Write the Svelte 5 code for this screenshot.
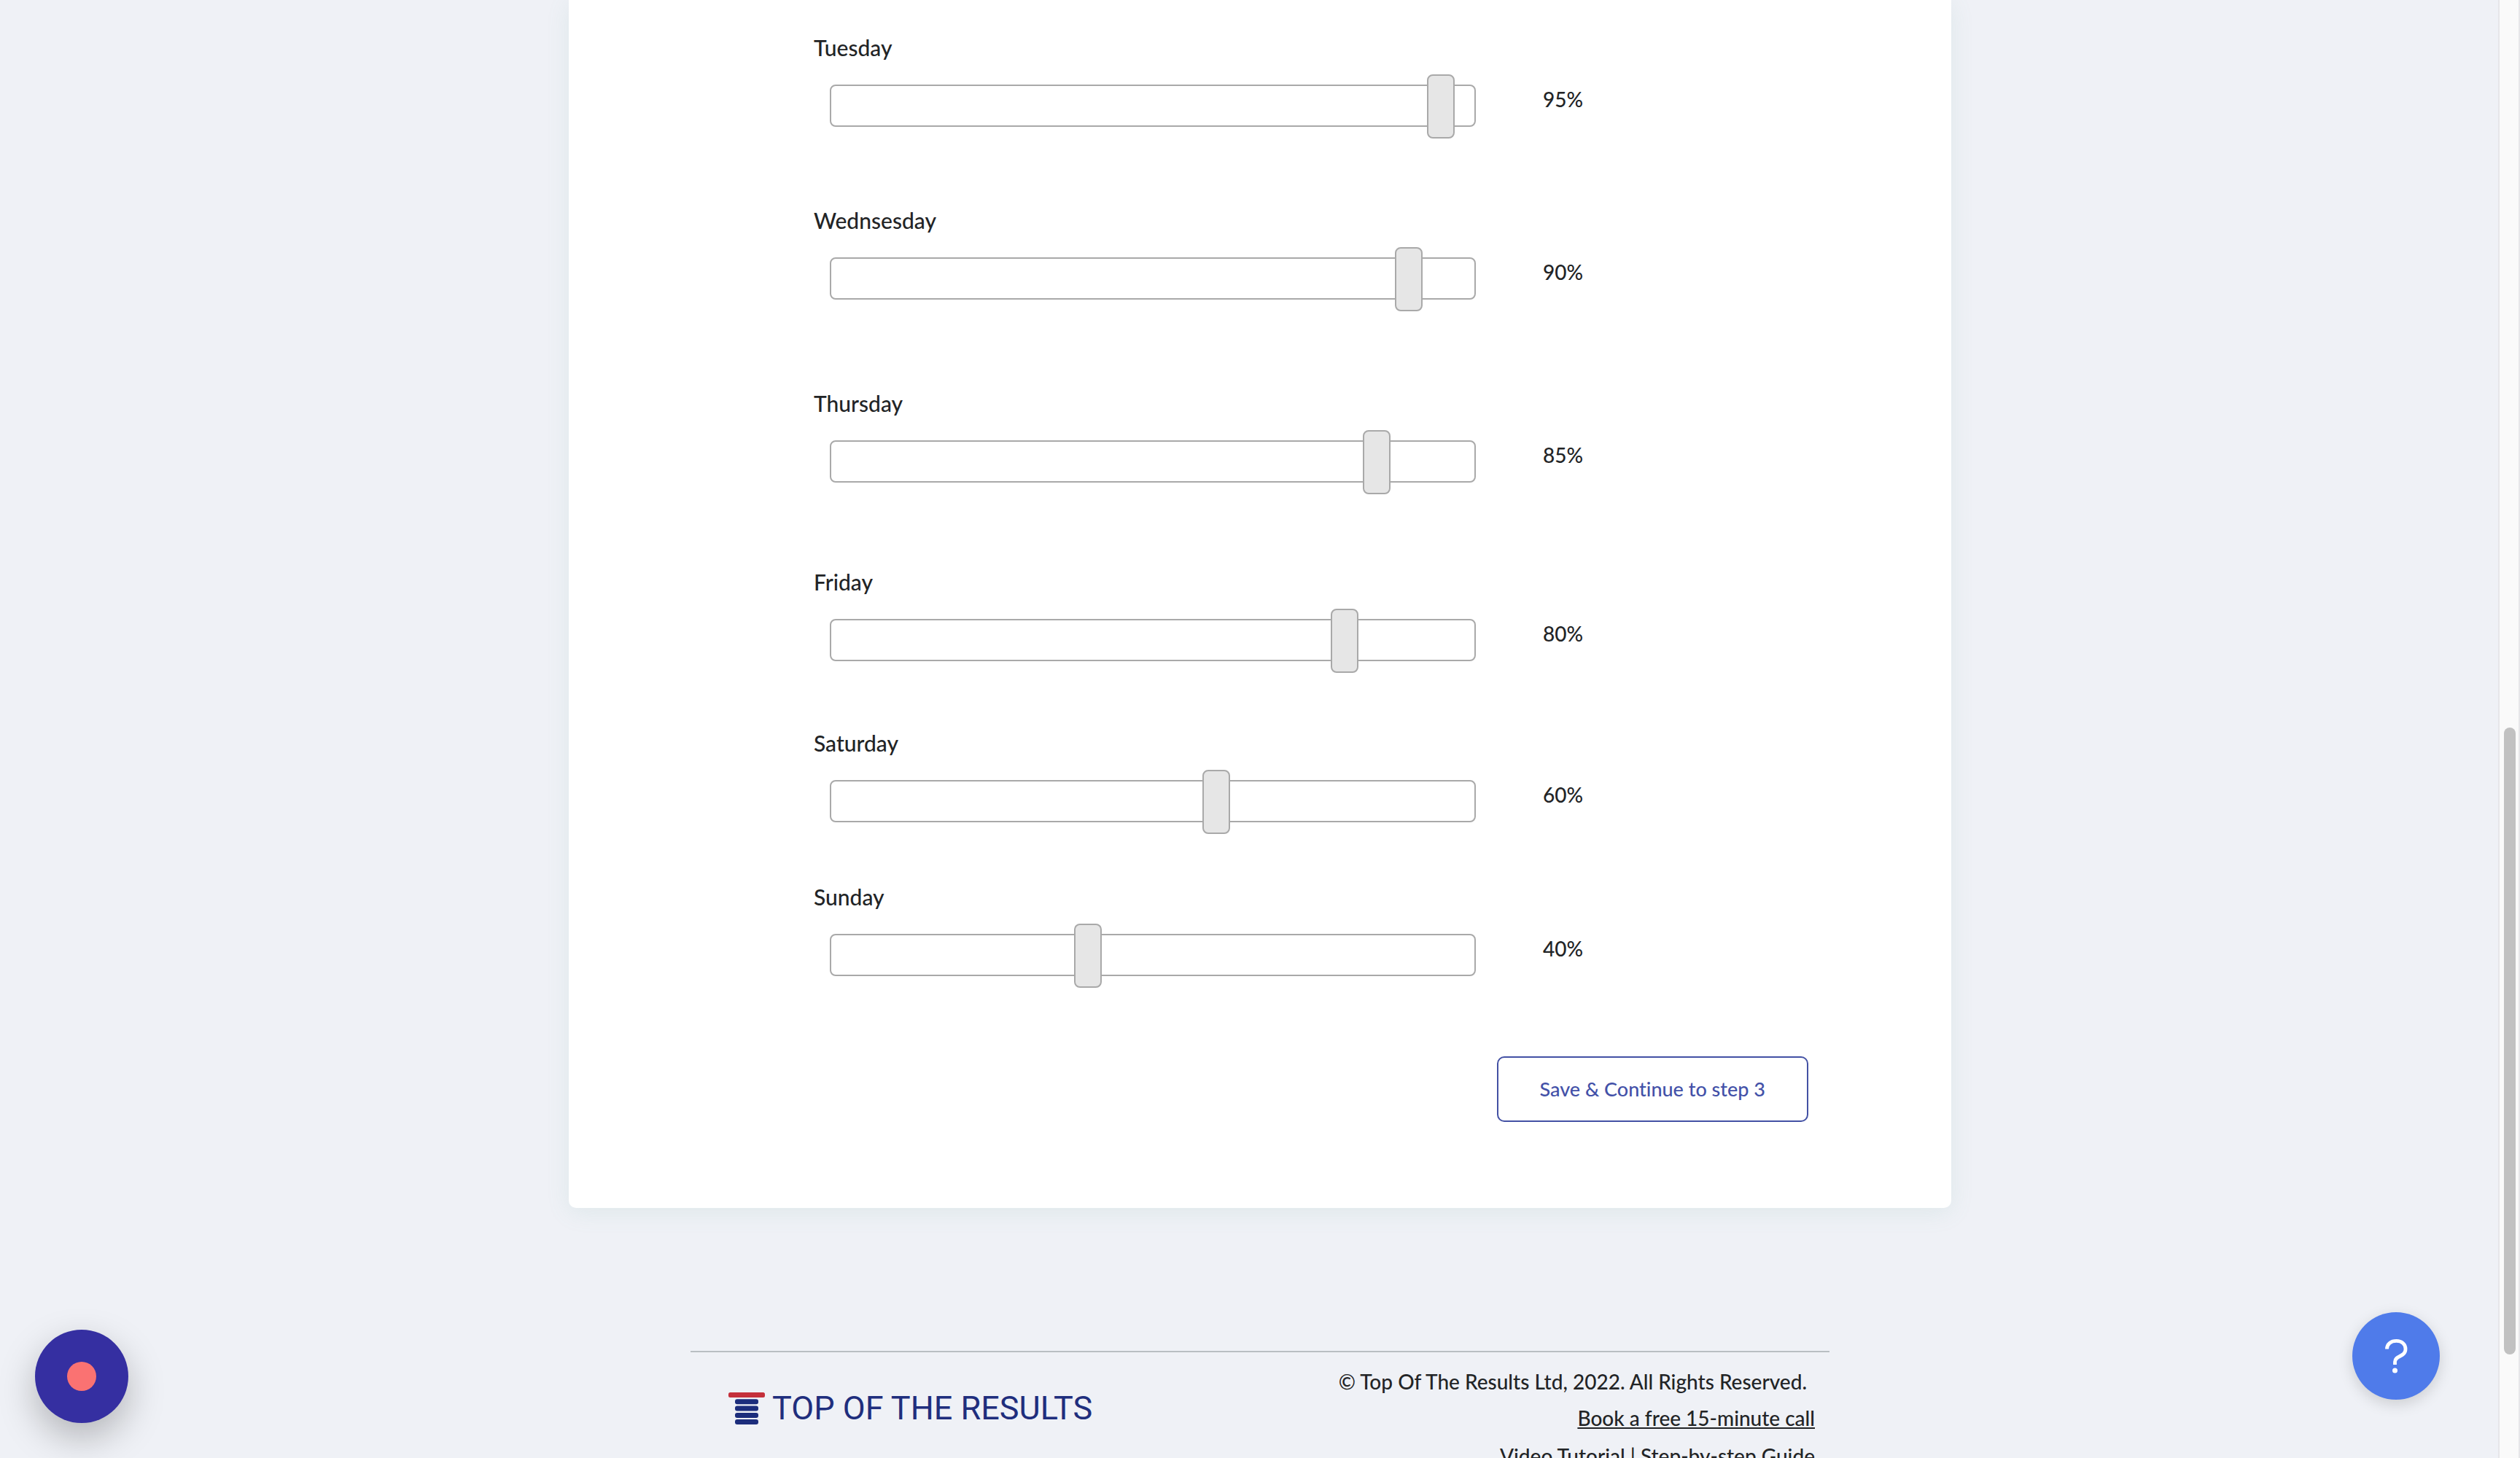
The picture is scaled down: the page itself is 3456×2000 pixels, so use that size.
<script>
  let days = $state([
    { id: 'tuesday', label: 'Tuesday', value: 95 },
    { id: 'wednesday', label: 'Wednsesday', value: 90 },
    { id: 'thursday', label: 'Thursday', value: 85 },
    { id: 'friday', label: 'Friday', value: 80 },
    { id: 'saturday', label: 'Saturday', value: 60 },
    { id: 'sunday', label: 'Sunday', value: 40 }
  ]);
</script>

<div class="page">
  <main class="card">
    <form onsubmit={(e) => e.preventDefault()}>
      <div class="days">
        {#each days as day (day.id)}
          <div class="day">
            <label for={day.id}>{day.label}</label>
            <div class="day-row">
              <div class="track">
                <input id={day.id} type="range" min="0" max="100" step="5" bind:value={day.value} />
              </div>
              <output for={day.id}>{day.value}%</output>
            </div>
          </div>
        {/each}
      </div>
      <div class="actions">
        <button type="submit" class="save">Save &amp; Continue to step 3</button>
      </div>
    </form>
  </main>

  <footer class="footer">
    <a class="logo" href="#home">
      <svg width="50" height="44" viewBox="0 0 50 44" aria-hidden="true">
        <rect x="0" y="0" width="50" height="7" rx="2.5" fill="#c4303b" />
        <rect x="9" y="9.3" width="32" height="7" rx="3" fill="#1c2d7c" />
        <rect x="9" y="18.6" width="32" height="7" rx="3" fill="#1c2d7c" />
        <rect x="9" y="27.9" width="32" height="7" rx="3" fill="#1c2d7c" />
        <rect x="9" y="37" width="32" height="7" rx="3" fill="#1c2d7c" />
      </svg>
      <span>TOP OF THE RESULTS</span>
    </a>
    <div class="legal">
      <p class="copyright">© Top Of The Results Ltd, 2022. All Rights Reserved.</p>
      <p><a class="underlined" href="#call">Book a free 15-minute call</a></p>
      <p><a href="#video">Video Tutorial</a> | <a href="#guide">Step-by-step Guide</a></p>
    </div>
  </footer>

  <button class="record" type="button" aria-label="Record">
    <span class="record-dot"></span>
  </button>

  <button class="help" type="button" aria-label="Help">
    <svg width="32" height="48" viewBox="0 0 32 48" fill="none" aria-hidden="true">
      <path d="M3.5 14.5C3.5 7.5 9 3.4 16.5 3.4s12.5 4.6 12.5 11c0 11.6-14.500 8.600-14.500 17.600v4" stroke="#fff" stroke-width="4.8" />
      <circle cx="14.5" cy="44" r="3.5" fill="#fff" />
    </svg>
  </button>

  <div class="scrollbar" aria-hidden="true">
    <div class="scrollbar-thumb"></div>
  </div>
</div>

<style>
  :global(body) {
    margin: 0;
    background: #eff1f6;
  }

  .page {
    box-sizing: border-box;
    height: 100vh;
    overflow: hidden;
    background: #eff1f6;
    color: #222426;
    font-family: Lato, 'Open Sans', sans-serif;
    font-size: 28px;
    font-weight: 500;
    font-variant-ligatures: none;
    line-height: 40px;
  }

  .card {
    box-sizing: border-box;
    max-width: 1896px;
    margin: 0 auto;
    padding: 45px 196px 118px 336px;
    background: #fff;
    border-radius: 0 0 10px 10px;
    box-shadow: 0 6px 32px rgba(110, 175, 160, 0.12);
  }

  .day {
    margin-bottom: 108px;
  }

  .day:nth-child(2) {
    margin-bottom: 122px;
  }

  .day:nth-child(3) {
    margin-bottom: 116px;
  }

  .day:nth-child(4) {
    margin-bottom: 92px;
  }

  .day:nth-child(5) {
    margin-bottom: 82px;
  }

  .day:last-child {
    margin-bottom: 0;
  }

  .day label {
    display: block;
    margin-bottom: 31px;
    font-size: 30px;
  }

  .day-row {
    display: flex;
    gap: 92px;
    padding-left: 22px;
  }

  .track {
    box-sizing: border-box;
    flex: 0 1 886px;
    height: 58px;
    border: 2px solid #a9a9a9;
    border-radius: 8px;
  }

  /* the handle's centre runs from one end of the track to the other */
  .track input {
    appearance: none;
    display: block;
    width: calc(100% + 36px);
    height: 88px;
    margin: -16px 0 0 -19px;
    background: transparent;
    cursor: pointer;
  }

  .track input::-webkit-slider-runnable-track {
    height: 88px;
    background: transparent;
  }

  .track input::-webkit-slider-thumb {
    appearance: none;
    box-sizing: border-box;
    width: 38px;
    height: 88px;
    border: 2px solid #a9a9a9;
    border-radius: 8px;
    background: #e6e6e6;
  }

  .actions {
    display: flex;
    justify-content: flex-end;
    margin-top: 110px;
  }

  .save {
    height: 90px;
    padding: 0 57px;
    border: 2px solid #4351a4;
    border-radius: 10px;
    background: #fff;
    color: #4351a8;
    font: inherit;
    font-size: 27px;
    cursor: pointer;
  }

  .footer {
    box-sizing: border-box;
    display: flex;
    justify-content: space-between;
    align-items: flex-start;
    max-width: 1562px;
    margin: 196px auto 0;
    padding: 20px 20px 0 52px;
    border-top: 2px solid #b9bfc3;
  }

  .footer a {
    color: inherit;
    text-decoration: none;
  }

  .footer .logo {
    display: flex;
    gap: 10px;
    margin-top: 35px;
    color: #1f2e7d;
    font-family: Roboto, sans-serif;
    font-size: 45px;
    font-weight: 400;
    line-height: 44px;
  }

  .legal {
    text-align: right;
  }

  .legal p {
    margin: 0 0 12px;
  }

  .legal .copyright {
    margin-bottom: 10px;
    padding-right: 11px;
  }

  .footer .underlined {
    text-decoration: underline;
  }

  .record,
  .help {
    position: fixed;
    display: flex;
    align-items: center;
    justify-content: center;
    padding: 0;
    border: none;
    border-radius: 50%;
    cursor: pointer;
  }

  .record {
    left: 48px;
    bottom: 48px;
    width: 128px;
    height: 128px;
    background: #352fa1;
    box-shadow: 0 20px 50px rgba(0, 0, 0, 0.25);
  }

  .record-dot {
    width: 40px;
    height: 40px;
    border-radius: 50%;
    background: #fa7272;
  }

  .help {
    right: 110px;
    bottom: 80px;
    width: 120px;
    height: 120px;
    background: #4f7bea;
    box-shadow: 0 6px 20px rgba(0, 0, 0, 0.15);
  }

  .scrollbar {
    position: fixed;
    top: 0;
    right: 0;
    bottom: 0;
    box-sizing: border-box;
    width: 30px;
    padding: 0 4px 0 6px;
    border: solid #e6e6e9;
    border-width: 0 2px;
    background: #fafafa;
  }

  .scrollbar-thumb {
    height: 43%;
    margin-top: 998px;
    border-radius: 8px;
    background: #c1c1c1;
  }
</style>
